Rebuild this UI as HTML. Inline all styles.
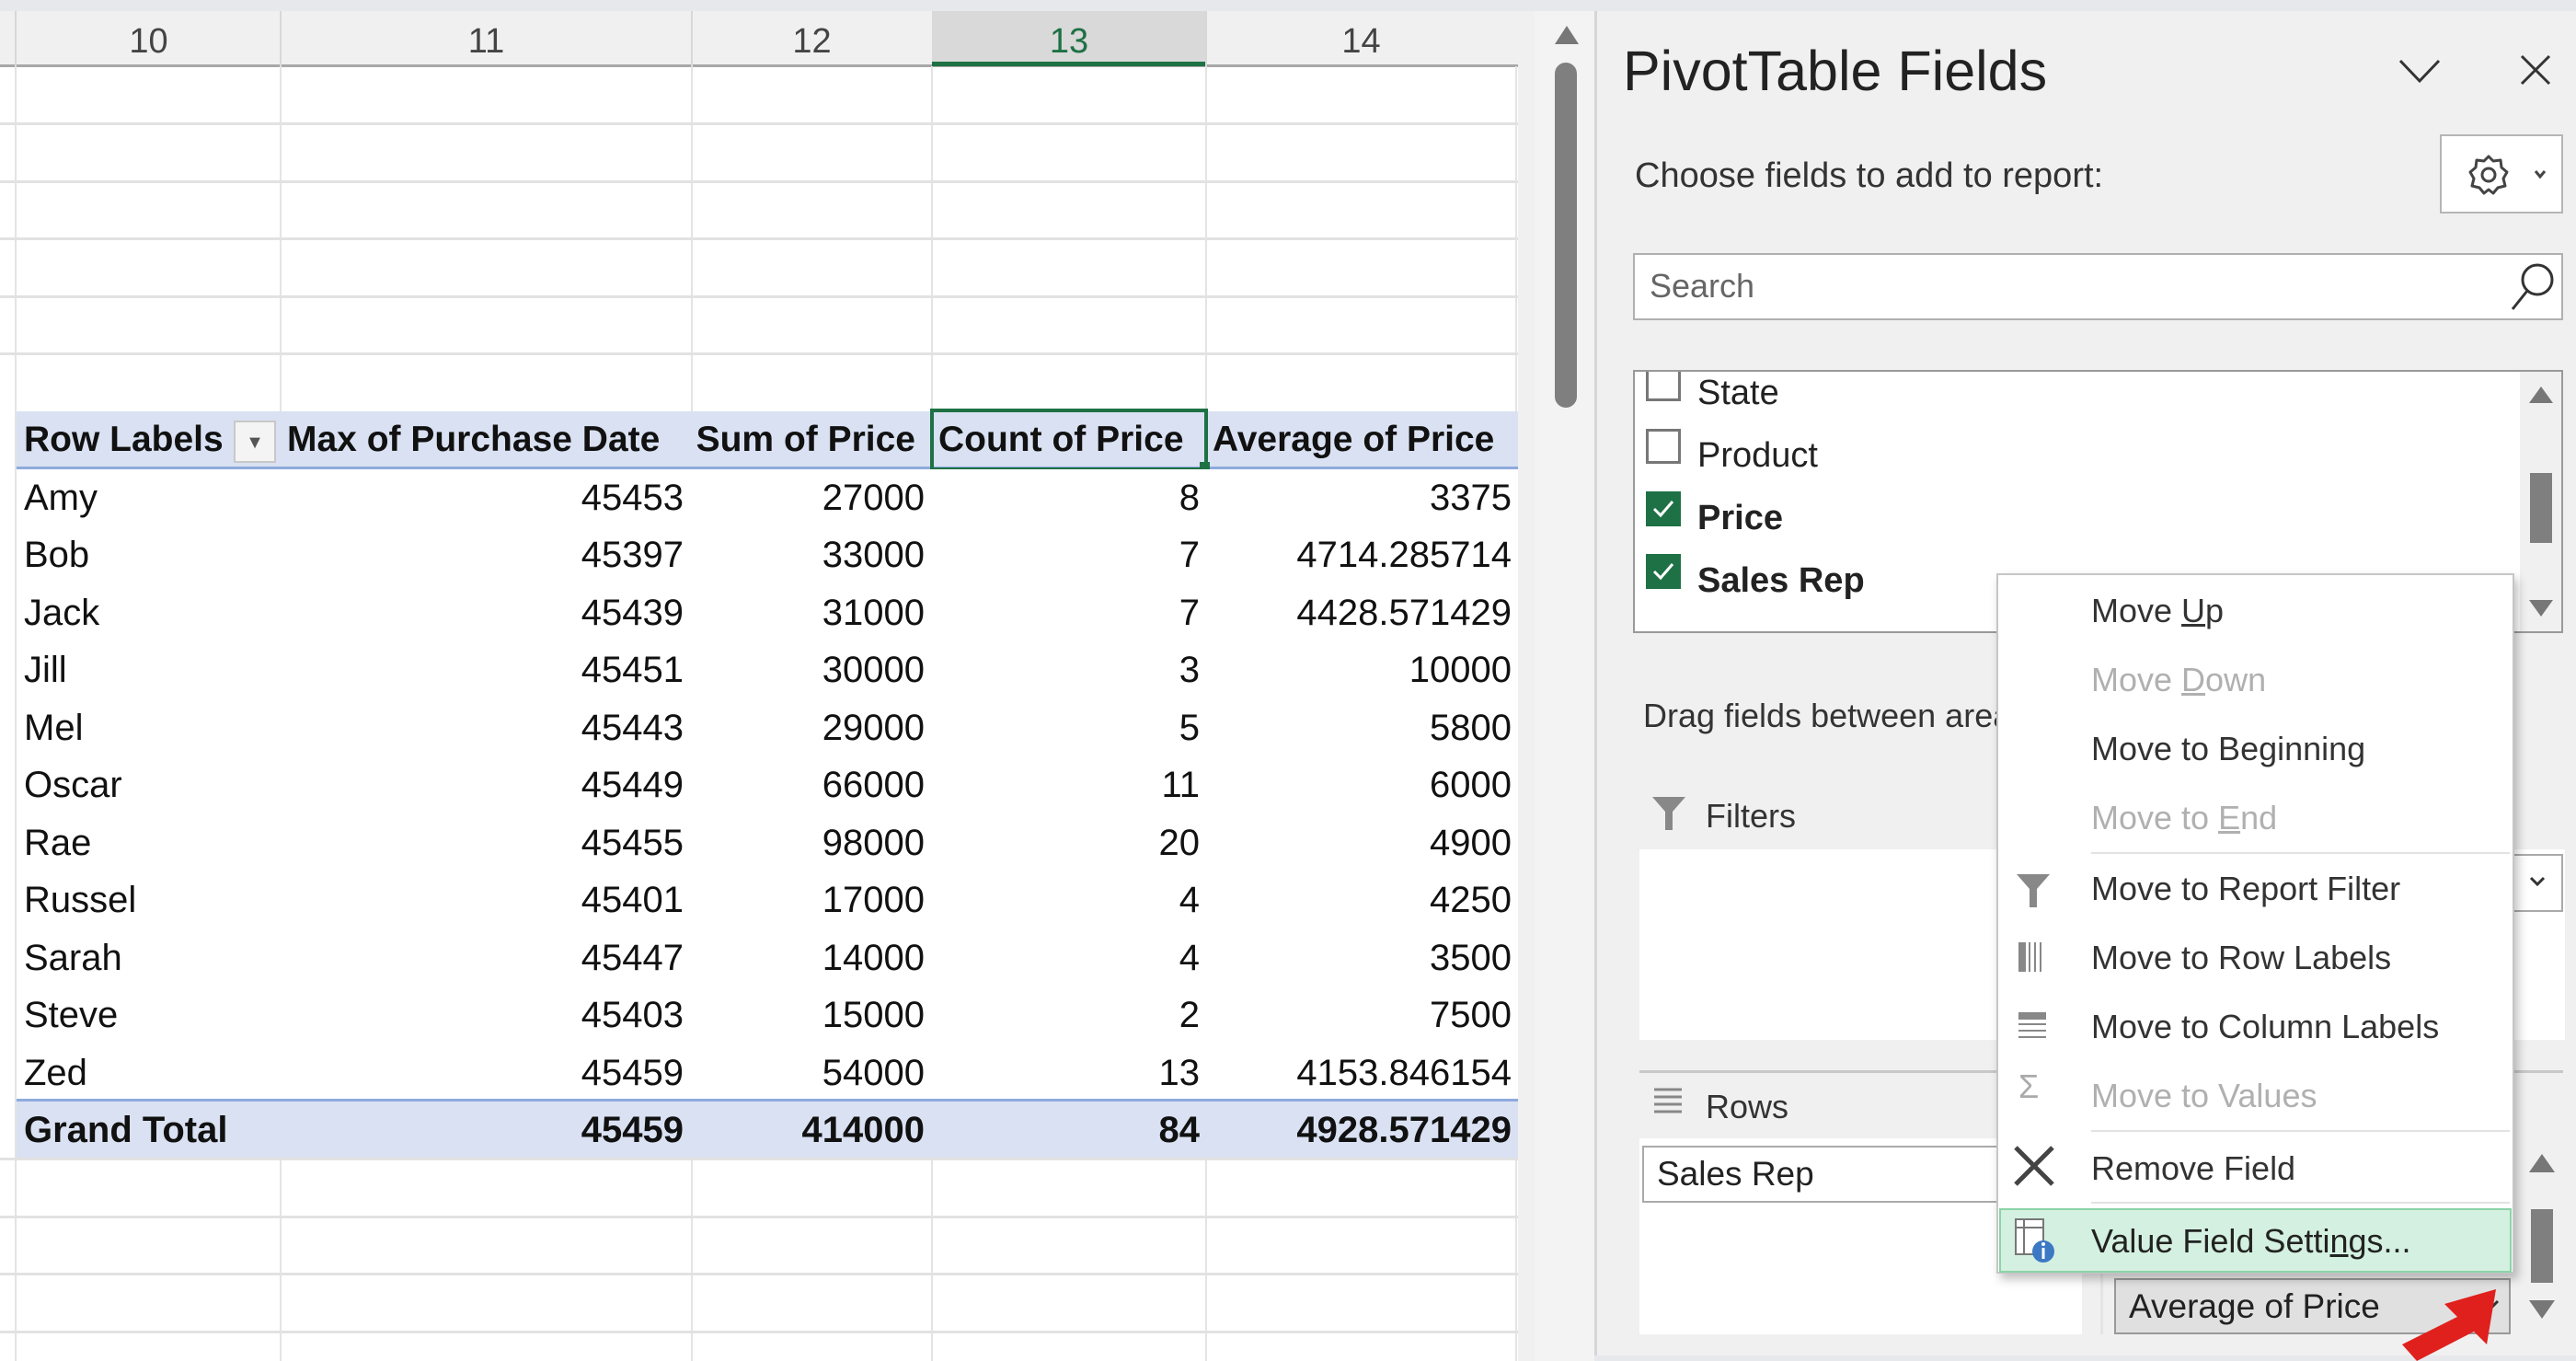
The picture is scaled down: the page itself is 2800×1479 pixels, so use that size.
<!DOCTYPE html>
<html><head><meta charset="utf-8"><style>
*{margin:0;padding:0;box-sizing:border-box}
body{width:2800px;height:1479px;overflow:hidden;background:#f0f0f0;font-family:"Liberation Sans",sans-serif;position:relative;color:#111}
.a{position:absolute}
.hl{position:absolute;left:0;width:1650px;height:3px;background:#e2e2e2}
.vl{position:absolute;top:72px;width:2px;height:1407px;background:#e4e4e4}
.ch{position:absolute;top:12px;height:60px;font-size:38px;color:#444;text-align:center;line-height:66px}
.r{position:absolute;left:18px;width:1632px;height:62.5px;background:#fff;font-size:40px;line-height:62px}
.r span{position:absolute;top:0}
.r .n{left:8px}
.r .v1{right:907px}.r .v2{right:645px}.r .v3{right:346px}.r .v4{right:7px}
.mi{position:absolute;left:2273px;font-size:36px;color:#333;line-height:50px}
.dis{color:#b0b0b0}
.sep{position:absolute;left:2273px;width:455px;height:2px;background:#e2e2e2}
</style></head><body>
<div class="a" style="left:0;top:0;width:2800px;height:12px;background:#e6e8ec"></div>
<div class="a" style="left:0;top:12px;width:1650px;height:1467px;background:#fff"></div>
<div class="a" style="left:0;top:12px;width:1650px;height:60px;background:#f0f0f0"></div>
<div class="a" style="left:0;top:70px;width:1650px;height:3px;background:#a8a8a8"></div>
<div class="a" style="left:1013px;top:12px;width:298px;height:60px;background:#d9d9d9"></div>
<div class="a" style="left:1013px;top:67px;width:298px;height:5px;background:#1e7145"></div>
<div class="ch" style="left:18px;width:287px">10</div>
<div class="ch" style="left:305px;width:447px">11</div>
<div class="ch" style="left:752px;width:261px">12</div>
<div class="ch" style="left:1013px;width:298px;color:#1e7145">13</div>
<div class="ch" style="left:1311px;width:337px">14</div>
<div class="vl" style="left:16px"></div><div class="vl" style="left:304px"></div><div class="vl" style="left:751px"></div><div class="vl" style="left:1012px"></div><div class="vl" style="left:1310px"></div><div class="vl" style="left:1647px"></div>
<div class="a" style="left:16px;top:12px;width:2px;height:60px;background:#d8d8d8"></div>
<div class="a" style="left:304px;top:12px;width:2px;height:60px;background:#d8d8d8"></div>
<div class="a" style="left:751px;top:12px;width:2px;height:60px;background:#d8d8d8"></div>
<div class="a" style="left:1310px;top:12px;width:2px;height:60px;background:#d8d8d8"></div>
<div class="hl" style="top:133px"></div><div class="hl" style="top:196px"></div><div class="hl" style="top:258px"></div><div class="hl" style="top:321px"></div><div class="hl" style="top:383px"></div>
<div class="hl" style="top:1258px"></div><div class="hl" style="top:1321px"></div><div class="hl" style="top:1383px"></div><div class="hl" style="top:1446px"></div>
<div class="r" style="top:447px;background:#d9e1f2;font-weight:bold;border-bottom:3px solid #8eaadc;font-size:39px">
<span style="left:8px">Row Labels</span>
<span style="left:294px">Max of Purchase Date</span>
<span style="right:655px">Sum of Price</span>
<span style="left:1002px">Count of Price</span>
<span style="left:1300px">Average of Price</span>
</div>
<div class="a" style="left:254px;top:457px;width:46px;height:46px;background:#f4f4f4;border:2px solid #c8c8c8;font-size:20px;color:#555;text-align:center;line-height:44px">▼</div>
<div class="a" style="left:1011px;top:444px;width:302px;height:68px;border:4px solid #1e7145"></div>
<div class="a" style="left:1304px;top:502px;width:11px;height:11px;background:#1e7145"></div>
<div class="r" style="top:509.5px"><span class="n">Amy</span><span class="v1">45453</span><span class="v2">27000</span><span class="v3">8</span><span class="v4">3375</span></div>
<div class="r" style="top:572px"><span class="n">Bob</span><span class="v1">45397</span><span class="v2">33000</span><span class="v3">7</span><span class="v4">4714.285714</span></div>
<div class="r" style="top:634.5px"><span class="n">Jack</span><span class="v1">45439</span><span class="v2">31000</span><span class="v3">7</span><span class="v4">4428.571429</span></div>
<div class="r" style="top:697px"><span class="n">Jill</span><span class="v1">45451</span><span class="v2">30000</span><span class="v3">3</span><span class="v4">10000</span></div>
<div class="r" style="top:759.5px"><span class="n">Mel</span><span class="v1">45443</span><span class="v2">29000</span><span class="v3">5</span><span class="v4">5800</span></div>
<div class="r" style="top:822px"><span class="n">Oscar</span><span class="v1">45449</span><span class="v2">66000</span><span class="v3">11</span><span class="v4">6000</span></div>
<div class="r" style="top:884.5px"><span class="n">Rae</span><span class="v1">45455</span><span class="v2">98000</span><span class="v3">20</span><span class="v4">4900</span></div>
<div class="r" style="top:947px"><span class="n">Russel</span><span class="v1">45401</span><span class="v2">17000</span><span class="v3">4</span><span class="v4">4250</span></div>
<div class="r" style="top:1009.5px"><span class="n">Sarah</span><span class="v1">45447</span><span class="v2">14000</span><span class="v3">4</span><span class="v4">3500</span></div>
<div class="r" style="top:1072px"><span class="n">Steve</span><span class="v1">45403</span><span class="v2">15000</span><span class="v3">2</span><span class="v4">7500</span></div>
<div class="r" style="top:1134.5px"><span class="n">Zed</span><span class="v1">45459</span><span class="v2">54000</span><span class="v3">13</span><span class="v4">4153.846154</span></div>
<div class="r" style="top:1194px;height:64px;background:#d9e1f2;font-weight:bold;border-top:3px solid #8eaadc"><span class="n">Grand Total</span><span class="v1">45459</span><span class="v2">414000</span><span class="v3">84</span><span class="v4">4928.571429</span></div>
<div class="a" style="left:1668px;top:12px;width:65px;height:1467px;background:#f3f3f3"></div>
<div class="a" style="left:1690px;top:28px;width:0;height:0;border-left:13px solid transparent;border-right:13px solid transparent;border-bottom:20px solid #777"></div>
<div class="a" style="left:1690px;top:68px;width:24px;height:375px;background:#7f7f7f;border-radius:12px"></div>
<div class="a" style="left:1733px;top:12px;width:3px;height:1467px;background:#d6d6d6"></div>
<div class="a" style="left:1764px;top:42px;font-size:61px;color:#222">PivotTable Fields</div>
<svg class="a" style="left:2605px;top:62px" width="50" height="30"><path d="M4 4 L25 26 L46 4" fill="none" stroke="#333" stroke-width="3"/></svg>
<svg class="a" style="left:2738px;top:58px" width="36" height="36"><path d="M3 3 L33 33 M33 3 L3 33" stroke="#333" stroke-width="3"/></svg>
<div class="a" style="left:1777px;top:170px;font-size:38px;color:#333">Choose fields to add to report:</div>
<div class="a" style="left:2652px;top:146px;width:134px;height:86px;background:#fff;border:2px solid #b5b5b5"></div>
<svg class="a" style="left:2680px;top:163px" width="90" height="54"><circle cx="25" cy="27" r="7" fill="none" stroke="#444" stroke-width="3"/><path d="M25 7 L30 12 L38 11 L39 19 L45 24 L41 31 L43 39 L35 41 L30 47 L25 43 L20 47 L15 41 L7 39 L9 31 L5 24 L11 19 L12 11 L20 12 Z" fill="none" stroke="#444" stroke-width="3" stroke-linejoin="round"/><path d="M76 23 L81 29 L86 23" fill="none" stroke="#444" stroke-width="3"/></svg>
<div class="a" style="left:1775px;top:275px;width:1011px;height:73px;background:#fff;border:2px solid #b0b0b0"></div>
<div class="a" style="left:1793px;top:290px;font-size:36px;color:#666">Search</div>
<svg class="a" style="left:2726px;top:282px" width="56" height="60"><circle cx="32" cy="22" r="16" fill="none" stroke="#333" stroke-width="3"/><path d="M21 34 L5 54" stroke="#333" stroke-width="3"/></svg>
<div class="a" style="left:1775px;top:402px;width:1011px;height:286px;background:#fff;border:2px solid #9a9a9a;overflow:hidden">
<div class="a" style="left:12px;top:-6px;width:38px;height:38px;border:3px solid #777"></div>
<div class="a" style="left:68px;top:2px;font-size:38px;color:#222">State</div>
<div class="a" style="left:12px;top:62px;width:38px;height:38px;border:3px solid #777"></div>
<div class="a" style="left:68px;top:70px;font-size:38px;color:#222">Product</div>
<div class="a" style="left:12px;top:130px;width:38px;height:38px;background:#1e7145"><svg width="38" height="38"><path d="M9 19 L16 26 L29 11" fill="none" stroke="#fff" stroke-width="3"/></svg></div>
<div class="a" style="left:68px;top:138px;font-size:38px;font-weight:bold;color:#222">Price</div>
<div class="a" style="left:12px;top:198px;width:38px;height:38px;background:#1e7145"><svg width="38" height="38"><path d="M9 19 L16 26 L29 11" fill="none" stroke="#fff" stroke-width="3"/></svg></div>
<div class="a" style="left:68px;top:206px;font-size:38px;font-weight:bold;color:#222">Sales Rep</div>
<div class="a" style="left:962px;top:0;width:47px;height:284px;background:#f0f0f0"></div>
<div class="a" style="left:972px;top:16px;width:0;height:0;border-left:13px solid transparent;border-right:13px solid transparent;border-bottom:18px solid #777"></div>
<div class="a" style="left:973px;top:110px;width:24px;height:76px;background:#7f7f7f"></div>
<div class="a" style="left:972px;top:248px;width:0;height:0;border-left:13px solid transparent;border-right:13px solid transparent;border-top:18px solid #777"></div>
</div>
<div class="a" style="left:1786px;top:757px;font-size:36px;color:#333">Drag fields between areas below:</div>
<svg class="a" style="left:1794px;top:864px" width="40" height="40"><path d="M2 2 H38 L24 18 V38 H16 V18 Z" fill="#888"/></svg>
<div class="a" style="left:1854px;top:866px;font-size:36px;color:#333">Filters</div>
<div class="a" style="left:1782px;top:923px;width:481px;height:207px;background:#fff"></div>
<div class="a" style="left:2298px;top:923px;width:490px;height:207px;background:#fff"></div>
<div class="a" style="left:2700px;top:928px;width:86px;height:63px;background:#fff;border:2px solid #aaa"></div>
<svg class="a" style="left:2748px;top:950px" width="20" height="16"><path d="M3 4 L10 11 L17 4" fill="none" stroke="#333" stroke-width="3"/></svg>
<div class="a" style="left:1782px;top:1163px;width:1004px;height:3px;background:#c8c8c8"></div>
<svg class="a" style="left:1796px;top:1180px" width="36" height="36"><path d="M2 4 H32 M2 12 H32 M2 20 H32 M2 28 H32" stroke="#888" stroke-width="3"/></svg>
<div class="a" style="left:1854px;top:1182px;font-size:36px;color:#333">Rows</div>
<div class="a" style="left:1782px;top:1237px;width:481px;height:213px;background:#fff"></div>
<div class="a" style="left:1785px;top:1245px;width:470px;height:62px;background:#fff;border:2px solid #aaa;font-size:37px;line-height:58px;padding-left:14px;color:#222">Sales Rep</div>
<div class="a" style="left:2283px;top:1237px;width:3px;height:213px;background:#e4e4e4"></div>
<div class="a" style="left:2298px;top:1389px;width:431px;height:61px;background:#e0e0e0;border:2px solid #999;font-size:37px;line-height:58px;padding-left:14px;color:#222">Average of Price</div>
<svg class="a" style="left:2698px;top:1410px" width="20" height="16"><path d="M3 4 L10 11 L17 4" fill="none" stroke="#333" stroke-width="3"/></svg>
<div class="a" style="left:2749px;top:1254px;width:0;height:0;border-left:14px solid transparent;border-right:14px solid transparent;border-bottom:20px solid #777"></div>
<div class="a" style="left:2751px;top:1314px;width:24px;height:80px;background:#7f7f7f"></div>
<div class="a" style="left:2749px;top:1413px;width:0;height:0;border-left:14px solid transparent;border-right:14px solid transparent;border-top:20px solid #777"></div>
<div class="a" style="left:1733px;top:1473px;width:1067px;height:6px;background:#e6e8ec"></div>
<div class="a" style="left:2170px;top:623px;width:563px;height:761px;background:#fff;border:2px solid #c6c6c6;box-shadow:4px 6px 10px rgba(0,0,0,0.25)"></div>
<div class="mi" style="top:639px">Move <u>U</u>p</div>
<div class="mi dis" style="top:714px">Move <u>D</u>own</div>
<div class="mi" style="top:789px">Move to Be<u>g</u>inning</div>
<div class="mi dis" style="top:864px">Move to <u>E</u>nd</div>
<div class="sep" style="top:926px"></div>
<svg class="a" style="left:2190px;top:948px" width="40" height="40"><path d="M2 2 H38 L24 18 V38 H16 V18 Z" fill="#888"/></svg>
<div class="mi" style="top:941px">Move to Report Filter</div>
<svg class="a" style="left:2192px;top:1022px" width="34" height="36"><rect x="2" y="2" width="8" height="32" fill="#888"/><path d="M14 2 V34 M20 2 V34 M26 2 V34" stroke="#888" stroke-width="2"/></svg>
<div class="mi" style="top:1016px">Move to Row Labels</div>
<svg class="a" style="left:2192px;top:1098px" width="34" height="34"><rect x="2" y="2" width="30" height="8" fill="#888"/><path d="M2 15 H32 M2 22 H32 M2 29 H32" stroke="#888" stroke-width="2"/></svg>
<div class="mi" style="top:1091px">Move to Column Labels</div>
<div class="a" style="left:2194px;top:1160px;font-size:36px;color:#aaa">Σ</div>
<div class="mi dis" style="top:1166px">Move to Values</div>
<div class="sep" style="top:1228px"></div>
<svg class="a" style="left:2188px;top:1244px" width="46" height="46"><path d="M3 3 L43 43 M43 3 L3 43" stroke="#444" stroke-width="5"/></svg>
<div class="mi" style="top:1245px">Remove Field</div>
<div class="sep" style="top:1306px"></div>
<div class="a" style="left:2173px;top:1313px;width:557px;height:70px;background:#d4f0e0;border:2px solid #8cd3a8"></div>
<svg class="a" style="left:2188px;top:1322px" width="48" height="54"><rect x="3" y="3" width="30" height="38" fill="#fff" stroke="#777" stroke-width="2"/><path d="M3 12 H33 M12 3 V41" stroke="#777" stroke-width="2"/><circle cx="33" cy="38" r="12" fill="#3c78c3"/><path d="M33 34 V46" stroke="#fff" stroke-width="3"/><circle cx="33" cy="30" r="2" fill="#fff"/></svg>
<div class="mi" style="top:1324px;color:#222">Value Field Setti<u>n</u>gs...</div>
<svg class="a" style="left:2605px;top:1395px" width="120" height="84"><path d="M108 6 L98 66 L84 52 L22 84 L6 66 L66 36 L52 22 Z" fill="#e0201c"/></svg>
</body></html>
